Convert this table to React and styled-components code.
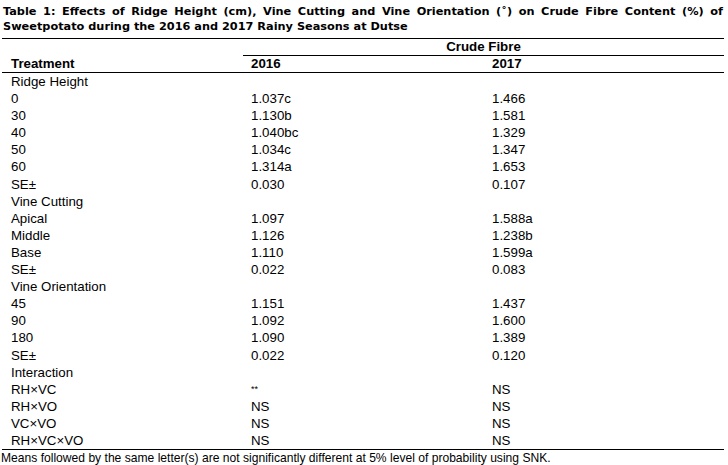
import React from 'react';
import styled, { createGlobalStyle } from 'styled-components';

const GlobalStyle = createGlobalStyle`
  body {
    margin: 0;
    background: #fff;
    color: #000;
    font-family: "Liberation Sans", Arial, sans-serif;
  }
`;

const Page = styled.div`
  width: 728px;
  padding-top: 5px;
`;

const Caption = styled.div`
  margin: 0 5px 0 3px;
  font-family: "DejaVu Sans", Verdana, sans-serif;
  font-weight: bold;
  font-size: 11.3px;
  line-height: 14.5px;
`;

const CaptionLine = styled.div`
  text-align: ${p => (p.$justify ? 'justify' : 'left')};
  text-align-last: ${p => (p.$justify ? 'justify' : 'auto')};
`;

const Table = styled.table`
  margin: 4px 0 0 2px;
  width: 722px;
  border-collapse: collapse;
  table-layout: fixed;
  border-top: 1px solid #000;
  border-bottom: 1px solid #000;
  font-size: 13.3px;
`;

const HeadCell = styled.th`
  height: 16px;
  padding: 0 0 0 ${p => p.$pad}px;
  line-height: 16px;
  font-weight: bold;
  text-align: ${p => (p.$center ? 'center' : 'left')};
  border-bottom: ${p => (p.$rule ? '1px solid #000' : 'none')};
  white-space: nowrap;
`;

const Cell = styled.td`
  height: 17.1px;
  padding: 0 0 0 ${p => p.$pad}px;
  line-height: 17.1px;
  vertical-align: middle;
  white-space: nowrap;
`;

const Stars = styled.span`
  font-size: 9px;
  vertical-align: 2px;
`;

const Footnote = styled.div`
  margin-left: 1px;
  font-size: 12.1px;
  line-height: 16px;
`;

const groups = [
  {
    title: 'Ridge Height',
    rows: [
      ['0', '1.037c', '1.466'],
      ['30', '1.130b', '1.581'],
      ['40', '1.040bc', '1.329'],
      ['50', '1.034c', '1.347'],
      ['60', '1.314a', '1.653'],
      ['SE±', '0.030', '0.107'],
    ],
  },
  {
    title: 'Vine Cutting',
    rows: [
      ['Apical', '1.097', '1.588a'],
      ['Middle', '1.126', '1.238b'],
      ['Base', '1.110', '1.599a'],
      ['SE±', '0.022', '0.083'],
    ],
  },
  {
    title: 'Vine Orientation',
    rows: [
      ['45', '1.151', '1.437'],
      ['90', '1.092', '1.600'],
      ['180', '1.090', '1.389'],
      ['SE±', '0.022', '0.120'],
    ],
  },
  {
    title: 'Interaction',
    rows: [
      ['RH×VC', '**', 'NS'],
      ['RH×VO', 'NS', 'NS'],
      ['VC×VO', 'NS', 'NS'],
      ['RH×VC×VO', 'NS', 'NS'],
    ],
  },
];

export default function App() {
  return (
    <Page>
      <GlobalStyle />
      <Caption>
        <CaptionLine $justify>
          Table 1: Effects of Ridge Height (cm), Vine Cutting and Vine Orientation (˚) on Crude Fibre Content (%) of
        </CaptionLine>
        <CaptionLine>Sweetpotato during the 2016 and 2017 Rainy Seasons at Dutse</CaptionLine>
      </Caption>
      <Table>
        <colgroup>
          <col style={{ width: 241 }} />
          <col style={{ width: 241 }} />
          <col style={{ width: 240 }} />
        </colgroup>
        <thead>
          <tr>
            <HeadCell $pad={0} />
            <HeadCell $pad={0} $center $rule colSpan={2}>Crude Fibre</HeadCell>
          </tr>
          <tr>
            <HeadCell $pad={9} $rule>Treatment</HeadCell>
            <HeadCell $pad={8} $rule>2016</HeadCell>
            <HeadCell $pad={8} $rule>2017</HeadCell>
          </tr>
        </thead>
        <tbody>
          {groups.map(g => (
            <React.Fragment key={g.title}>
              <tr>
                <Cell $pad={9}>{g.title}</Cell>
                <Cell $pad={8} />
                <Cell $pad={8} />
              </tr>
              {g.rows.map((r, i) => (
                <tr key={g.title + i}>
                  <Cell $pad={9}>{r[0]}</Cell>
                  <Cell $pad={8}>{r[1] === '**' ? <Stars>**</Stars> : r[1]}</Cell>
                  <Cell $pad={8}>{r[2]}</Cell>
                </tr>
              ))}
            </React.Fragment>
          ))}
        </tbody>
      </Table>
      <Footnote>
        Means followed by the same letter(s) are not significantly different at 5% level of probability using SNK.
      </Footnote>
    </Page>
  );
}
